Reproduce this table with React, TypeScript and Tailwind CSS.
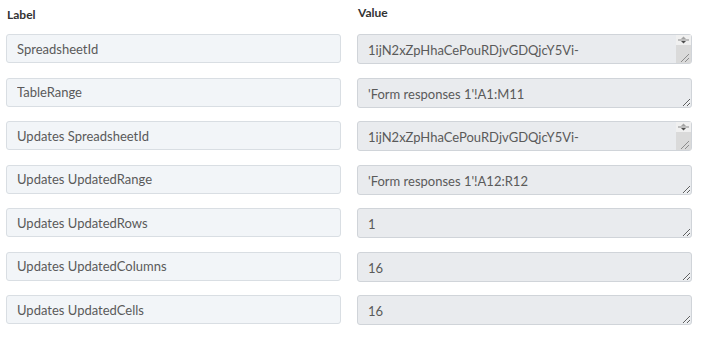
const rows = [
  { label: 'SpreadsheetId', value: '1ijN2xZpHhaCePouRDjvGDQjcY5Vi-KqL8wTfZbNmR3sUoAe', scroll: true },
  { label: 'TableRange', value: "'Form responses 1'!A1:M11" },
  { label: 'Updates SpreadsheetId', value: '1ijN2xZpHhaCePouRDjvGDQjcY5Vi-KqL8wTfZbNmR3sUoAe', scroll: true },
  { label: 'Updates UpdatedRange', value: "'Form responses 1'!A12:R12" },
  { label: 'Updates UpdatedRows', value: '1' },
  { label: 'Updates UpdatedColumns', value: '16' },
  { label: 'Updates UpdatedCells', value: '16' },
];

// tiny classic scrollbar + resize grip shown on the overflowing textareas
function FakeScrollbar() {
  return (
    <svg className="absolute right-[1px] top-[1px]" width="15" height="28" viewBox="0 0 15 28">
      <rect x="0" y="0" width="15" height="10" fill="#f0f0f0" />
      <path d="M7.5 1.5 L5 4 L10 4 Z" fill="#a3a3a3" />
      <rect x="2" y="4.5" width="11" height="1" fill="#8a8a8a" />
      <path d="M5 6 L10 6 L7.5 8.5 Z" fill="#4d4d4d" />
      <rect x="0" y="10" width="15" height="18" fill="#dadada" />
      <path d="M13 19 L5 27 M13 23 L9 27" stroke="#8c8c8c" strokeWidth="1" />
    </svg>
  );
}

export default function App() {
  return (
    <div className="min-h-[340px] bg-white px-[6px] font-['Lato','Liberation_Sans',sans-serif]">
      <div className="flex gap-4 pt-[4px] h-[34px]">
        <div className="w-[335px] pt-[2px] pl-[1px] text-[12px] font-bold text-[#333]">Label</div>
        <div className="w-[335px] pl-[1px] text-[12px] font-bold text-[#333]">Value</div>
      </div>
      <div className="flex flex-col gap-[13.5px]">
        {rows.map((row) => (
          <div key={row.label} className="flex gap-4">
            <input
              readOnly
              value={row.label}
              className="w-[335px] h-[29px] rounded-[3px] border border-[#d9dee3] bg-[#f2f5f8] px-[10px] text-[13px] text-[#5a5a5a] outline-none"
            />
            <div className="relative w-[335px] h-[30px]">
              <textarea
                readOnly
                value={row.value}
                className={`block w-full h-full rounded-[3px] border border-[#d0d4d9] bg-[#e9ebee] pl-[10px] pr-[20px] pt-[6px] pb-0 text-[13px] leading-[18px] text-[#5a5a5a] outline-none ${
                  row.scroll ? 'resize-none overflow-hidden' : ''
                }`}
              />
              {row.scroll && <FakeScrollbar />}
            </div>
          </div>
        ))}
      </div>
    </div>
  );
}
